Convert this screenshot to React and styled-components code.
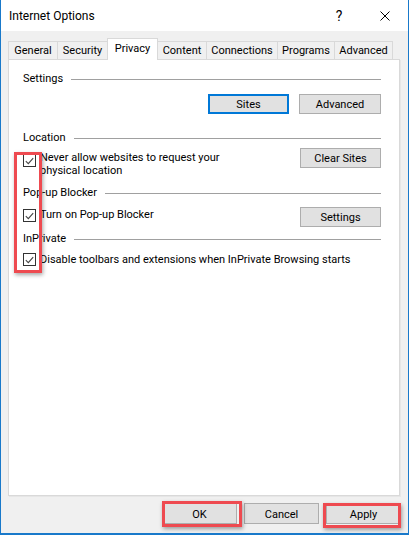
import styled, { createGlobalStyle } from "styled-components";

const Global = createGlobalStyle`
  html, body {
    margin: 0;
    padding: 0;
    background: #ffffff;
  }
  * {
    box-sizing: border-box;
  }
`;

const font = `Roboto, "Liberation Sans", sans-serif`;

const Window = styled.div`
  position: relative;
  width: 409px;
  height: 535px;
  display: flex;
  flex-direction: column;
  border-left: 1px solid #1979ca;
  border-right: 1px solid #1979ca;
  border-bottom: 2px solid #1979ca;
  font-family: ${font};
  font-size: 11px;
  color: #000;
  overflow: hidden;
`;

const TitleBar = styled.div`
  height: 31px;
  flex: none;
  display: flex;
  align-items: center;
  padding-left: 8px;
  padding-top: 1px;
  background: #ffffff;
`;

const Title = styled.div`
  flex: 1;
  font-size: 12px;
  color: #000;
`;

const HelpGlyph = styled.div`
  width: 46px;
  text-align: center;
  font-size: 14px;
`;

const CloseBox = styled.div`
  width: 46px;
  display: flex;
  justify-content: center;
  align-items: center;
`;

const Body = styled.div`
  flex: 1;
  display: flex;
  flex-direction: column;
  background: #f0f0f0;
  padding: 7px 7px 9px 7px;
`;

const TabRow = styled.div`
  height: 22px;
  flex: none;
  display: flex;
  align-items: flex-end;
  position: relative;
  z-index: 1;
  margin-bottom: -1px;
`;

const Tab = styled.div`
  width: ${(p) => p.$w}px;
  height: ${(p) => (p.$active ? 22 : 19)}px;
  display: flex;
  justify-content: center;
  align-items: ${(p) => (p.$active ? "flex-start" : "center")};
  padding-top: ${(p) => (p.$active ? 3 : 0)}px;
  background: ${(p) => (p.$active ? "#ffffff" : "#f0f0f0")};
  border: 1px solid #d9d9d9;
  border-bottom: ${(p) => (p.$active ? "none" : "1px solid #d9d9d9")};
  margin-left: -1px;
  &:first-child {
    margin-left: 0;
  }
`;

const Panel = styled.div`
  height: 437px;
  width: 392px;
  flex: none;
  background: #ffffff;
  border: 1px solid #d9d9d9;
  box-shadow: 1px 1px 0 #e6e6e6;
  display: flex;
  flex-direction: column;
  padding: 12px 18px 0 14px;
`;

const GroupHeader = styled.div`
  display: flex;
  align-items: center;
  height: 14px;
  line-height: 14px;
  margin-top: ${(p) => p.$mt}px;
  &::after {
    content: "";
    flex: 1;
    height: 1px;
    background: #a0a0a0;
    margin-left: 8px;
    margin-top: 1px;
  }
`;

const ButtonRow = styled.div`
  display: flex;
  justify-content: flex-end;
  gap: 10px;
  margin-top: ${(p) => p.$mt}px;
`;

const Button = styled.div`
  width: ${(p) => p.$w || 81}px;
  height: ${(p) => p.$h || 20}px;
  flex: none;
  display: flex;
  justify-content: center;
  align-items: center;
  padding-top: 1px;
  background: #e1e1e1;
  border: ${(p) => (p.$focus ? "2px solid #0078d7" : "1px solid #adadad")};
  color: #000;
`;

const OptionRow = styled.div`
  display: flex;
  align-items: flex-start;
  margin-top: ${(p) => p.$mt}px;
`;

const Check = styled.div`
  width: 13px;
  height: 13px;
  flex: none;
  border: 1px solid #333333;
  background: #ffffff;
  display: flex;
  justify-content: center;
  align-items: center;
  margin-top: ${(p) => p.$mt}px;
  margin-right: 4px;
`;

const OptionText = styled.div`
  flex: 1;
  line-height: ${(p) => p.$lh || 14}px;
  margin-top: ${(p) => p.$mt || 0}px;
`;

const Footer = styled.div`
  display: flex;
  justify-content: flex-end;
  gap: 7px;
  margin-top: 7px;
`;

const Callout = styled.div`
  position: absolute;
  left: ${(p) => p.$x}px;
  top: ${(p) => p.$y}px;
  width: ${(p) => p.$w}px;
  height: ${(p) => p.$h}px;
  border: 3px solid #ee4a50;
  box-shadow: 1px 2px 4px rgba(0, 0, 0, 0.35);
  pointer-events: none;
`;

const tabs = [
  ["General", 50],
  ["Security", 51],
  ["Privacy", 51],
  ["Content", 50],
  ["Connections", 72],
  ["Programs", 58],
  ["Advanced", 59],
];

function CheckMark() {
  return (
    <svg width="9" height="8" viewBox="0 0 9 8">
      <path d="M0.8 4.2 L3.3 6.6 L8.2 1.2" fill="none" stroke="#444" strokeWidth="1.1" />
    </svg>
  );
}

export default function App() {
  return (
    <>
      <Global />
      <Window>
        <TitleBar>
          <Title>Internet Options</Title>
          <HelpGlyph>?</HelpGlyph>
          <CloseBox>
            <svg width="10" height="10" viewBox="0 0 10 10">
              <path d="M0.5 0.5 L9.5 9.5 M9.5 0.5 L0.5 9.5" stroke="#000" strokeWidth="1" />
            </svg>
          </CloseBox>
        </TitleBar>
        <Body>
          <TabRow>
            {tabs.map(([name, w]) => (
              <Tab key={name} $w={w} $active={name === "Privacy"}>
                {name}
              </Tab>
            ))}
          </TabRow>
          <Panel>
            <GroupHeader $mt={0}>Settings</GroupHeader>
            <ButtonRow $mt={8}>
              <Button $focus>Sites</Button>
              <Button $w={82}>Advanced</Button>
            </ButtonRow>

            <GroupHeader $mt={17}>Location</GroupHeader>
            <OptionRow $mt={3}>
              <Check $mt={6}>
                <CheckMark />
              </Check>
              <OptionText $lh={13} $mt={3}>
                Never allow websites to request your
                <br />
                physical location
              </OptionText>
              <Button>Clear Sites</Button>
            </OptionRow>

            <GroupHeader $mt={9}>Pop-up Blocker</GroupHeader>
            <OptionRow $mt={7}>
              <Check $mt={2}>
                <CheckMark />
              </Check>
              <OptionText $mt={1}>Turn on Pop-up Blocker</OptionText>
              <Button>Settings</Button>
            </OptionRow>

            <GroupHeader $mt={5}>InPrivate</GroupHeader>
            <OptionRow $mt={6}>
              <Check $mt={1}>
                <CheckMark />
              </Check>
              <OptionText $mt={1}>Disable toolbars and extensions when InPrivate Browsing starts</OptionText>
            </OptionRow>
          </Panel>
          <Footer>
            <Button $w={75} $h={21}>OK</Button>
            <Button $w={75} $h={21}>Cancel</Button>
            <Button $w={75} $h={21}>Apply</Button>
          </Footer>
        </Body>
        <Callout $x={13} $y={152} $w={28} $h={121} />
        <Callout $x={161} $y={501} $w={80} $h={26} />
        <Callout $x={322} $y={503} $w={78} $h={25} />
      </Window>
    </>
  );
}
